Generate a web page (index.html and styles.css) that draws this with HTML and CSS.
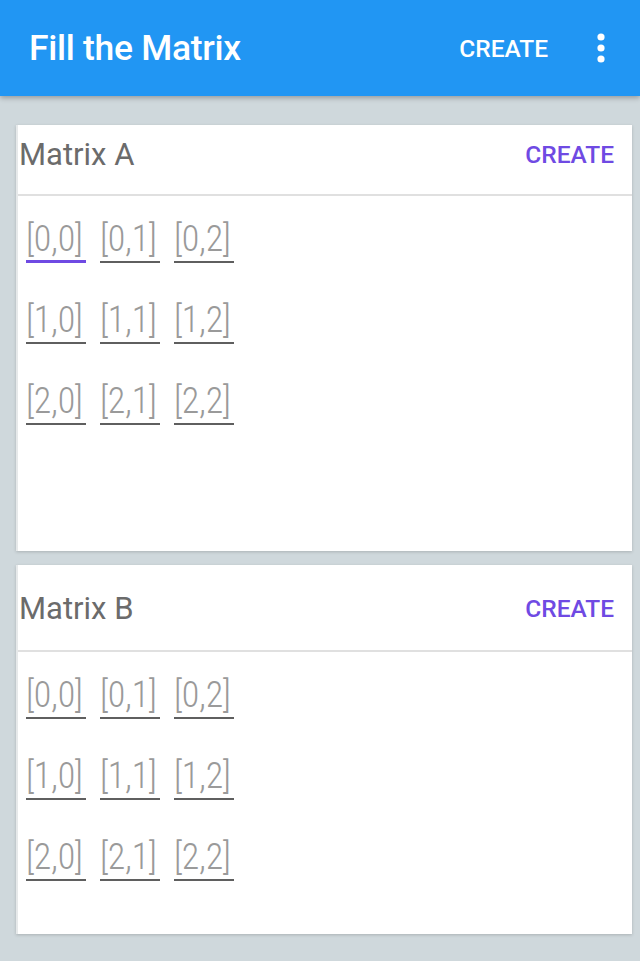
FILE: index.html
```html
<!DOCTYPE html>
<html>
<head>
<meta charset="utf-8">
<title>Fill the Matrix</title>
<link rel="stylesheet" href="styles.css">
</head>
<body>
<header class="appbar">
  <h1 class="appbar__title">Fill the Matrix</h1>
  <span class="appbar__action">CREATE</span>
  <span class="appbar__more" aria-label="More options">
    <svg width="10" height="30" viewBox="0 0 10 30"><circle cx="5" cy="4" r="3.6" fill="#fff"/><circle cx="5" cy="15" r="3.6" fill="#fff"/><circle cx="5" cy="26" r="3.6" fill="#fff"/></svg>
  </span>
</header>
<main class="content">
  <section class="card card--first">
    <div class="card__head card__head--a">
      <span class="card__title">Matrix A</span>
      <span class="card__action">CREATE</span>
    </div>
    <div class="card__body card__body--tall">
      <div class="grid">
        <span class="cell cell--focus">[0,0]</span><span class="cell">[0,1]</span><span class="cell">[0,2]</span>
        <span class="cell">[1,0]</span><span class="cell">[1,1]</span><span class="cell">[1,2]</span>
        <span class="cell">[2,0]</span><span class="cell">[2,1]</span><span class="cell">[2,2]</span>
      </div>
    </div>
  </section>
  <section class="card">
    <div class="card__head card__head--b">
      <span class="card__title">Matrix B</span>
      <span class="card__action">CREATE</span>
    </div>
    <div class="card__body">
      <div class="grid">
        <span class="cell">[0,0]</span><span class="cell">[0,1]</span><span class="cell">[0,2]</span>
        <span class="cell">[1,0]</span><span class="cell">[1,1]</span><span class="cell">[1,2]</span>
        <span class="cell">[2,0]</span><span class="cell">[2,1]</span><span class="cell">[2,2]</span>
      </div>
    </div>
  </section>
</main>
</body>
</html>
```
FILE: styles.css
```css
html, body {
  margin: 0;
  padding: 0;
}
body {
  background: #cfd8dc;
  font-family: Roboto, "Noto Sans", sans-serif;
  height: 961px;
  overflow: hidden;
}
.appbar {
  height: 96px;
  background: #2196f3;
  display: flex;
  align-items: center;
  padding: 0 34px 0 29px;
  box-shadow: 0 2px 5px rgba(0,0,0,0.28);
  position: relative;
  z-index: 1;
}
.appbar__title {
  flex: 1;
  margin: 0;
  color: #fff;
  font-size: 35.5px;
  font-weight: 500;
  letter-spacing: -0.3px;
}
.appbar__action {
  color: #fff;
  font-size: 24.5px;
  font-weight: 500;
  margin-right: 48px;
}
.appbar__more {
  display: flex;
  align-items: center;
}
.content {
  padding: 29px 8px 0 16px;
  display: flex;
  flex-direction: column;
  gap: 14px;
}
.card {
  background: #fff;
  border-left: 2px solid #e6e9ea;
  box-shadow: 0 1px 3px rgba(0,0,0,0.18);
}
.card__head {
  display: flex;
  align-items: center;
  justify-content: space-between;
  padding: 0 18px 0 1px;
  border-bottom: 2px solid #e0e0e0;
}
.card__head--a { padding-bottom: 10px; height: 59px; }
.card__head--b { padding-top: 2px; height: 83px; }
.card__title {
  font-size: 31px;
  color: #6b6b6b;
}
.card__action {
  font-size: 24.5px;
  font-weight: 500;
  color: #6f4ae3;
}
.card__body {
  padding: 25px 0 53px 8px;
}
.card__body--tall {
  padding-bottom: 126px;
}
.grid {
  display: grid;
  grid-template-columns: repeat(3, 60px);
  column-gap: 14px;
  row-gap: 39px;
}
.cell {
  font-size: 36px;
  font-stretch: 75%;
  font-weight: 300;
  line-height: 36px;
  color: #9a9a9a;
  padding-bottom: 4px;
  border-bottom: 2px solid #5f5f5f;
  letter-spacing: -0.3px;
}
.cell--focus {
  border-bottom-color: #6f4ae3;
  border-bottom-width: 3px;
  padding-bottom: 3px;
}
```
